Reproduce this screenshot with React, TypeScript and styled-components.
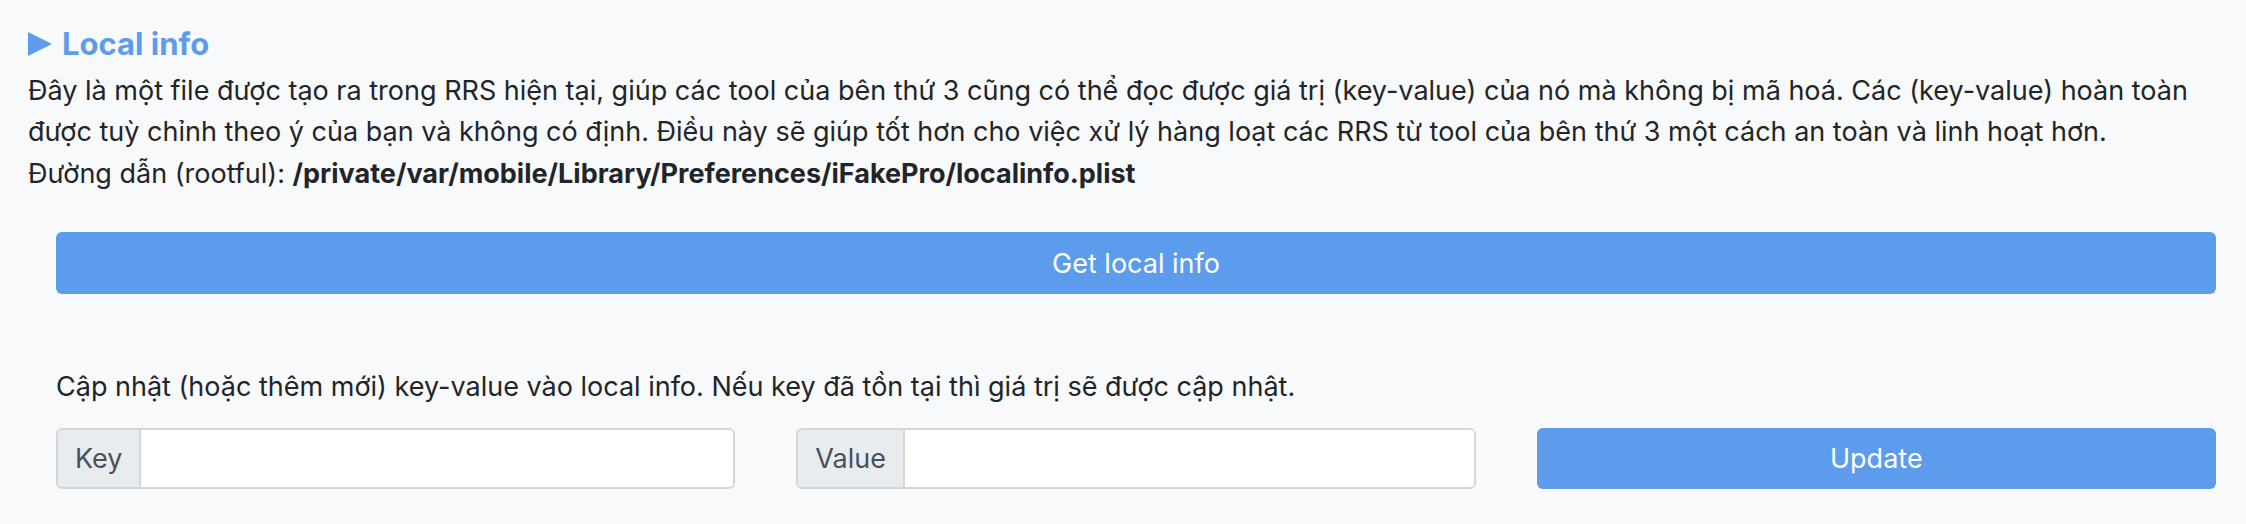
import React, { useState } from 'react'
import styled, { createGlobalStyle } from 'styled-components'

const GlobalStyle = createGlobalStyle`
  html, body {
    margin: 0;
    padding: 0;
    background: #f8f9fa;
  }
  body {
    font-family: Inter, "Noto Sans", "Liberation Sans", sans-serif;
    color: #212529;
  }
`

const Page = styled.div`
  padding: 25px 20px 30px 28px;
  background: #f8f9fa;
`

const Title = styled.h5`
  display: flex;
  align-items: center;
  gap: 10px;
  margin: 0 0 7.5px 0;
  font-size: 31px;
  line-height: 1.2;
  font-weight: 700;
  color: #5d9cec;
`

const Arrow = styled.span`
  display: inline-block;
  width: 0;
  height: 0;
  border-top: 12.5px solid transparent;
  border-bottom: 12.5px solid transparent;
  border-left: 24px solid #5d9cec;
`

const Text = styled.div`
  font-size: 27px;
  line-height: 41.5px;
  color: #212529;
`

const Path = styled.b`
  font-weight: 700;
`

const Section = styled.div<{ $top: number }>`
  margin: ${p => p.$top}px 10px 0 28px;
`

const Button = styled.button<{ $full?: boolean }>`
  display: block;
  width: 100%;
  height: ${p => (p.$full ? 62 : 61)}px;
  border: 0;
  border-radius: 6px;
  background: #5d9cec;
  color: #ffffff;
  font-family: inherit;
  font-size: 27px;
  cursor: pointer;
`

const Row = styled.div`
  display: grid;
  grid-template-columns: repeat(3, 1fr);
  gap: 61px;
  margin-top: 20px;
`

const InputGroup = styled.div`
  display: flex;
  height: 61px;
  border: 2px solid #d3d7dc;
  border-radius: 6px;
  overflow: hidden;
  background: #ffffff;
  box-sizing: border-box;
`

const Addon = styled.span`
  display: flex;
  align-items: center;
  padding: 0 17px;
  background: #e9ecef;
  border-right: 2px solid #d3d7dc;
  color: #495057;
  font-size: 27px;
`

const Field = styled.input`
  flex: 1;
  min-width: 0;
  border: 0;
  outline: 0;
  padding: 0 16px;
  font-family: inherit;
  font-size: 27px;
  color: #495057;
  background: #ffffff;
`

export default function App() {
  const [key, setKey] = useState('')
  const [value, setValue] = useState('')

  return (
    <>
      <GlobalStyle />
      <Page>
        <Title>
          <Arrow />
          Local info
        </Title>
        <Text>
          Đây là một file được tạo ra trong RRS hiện tại, giúp các tool của bên thứ 3 cũng có thể đọc được giá trị (key-value) của nó mà không bị mã hoá. Các (key-value) hoàn toàn được tuỳ chỉnh theo ý của bạn và không có định. Điều này sẽ giúp tốt hơn cho việc xử lý hàng loạt các RRS từ tool của bên thứ 3 một cách an toàn và linh hoạt hơn.
        </Text>
        <Text>
          Đường dẫn (rootful): <Path>/private/var/mobile/Library/Preferences/iFakePro/localinfo.plist</Path>
        </Text>
        <Section $top={38}>
          <Button $full>Get local info</Button>
        </Section>
        <Section $top={72}>
          <Text>Cập nhật (hoặc thêm mới) key-value vào local info. Nếu key đã tồn tại thì giá trị sẽ được cập nhật.</Text>
          <Row>
            <InputGroup>
              <Addon>Key</Addon>
              <Field value={key} onChange={e => setKey(e.target.value)} />
            </InputGroup>
            <InputGroup>
              <Addon>Value</Addon>
              <Field value={value} onChange={e => setValue(e.target.value)} />
            </InputGroup>
            <Button>Update</Button>
          </Row>
        </Section>
      </Page>
    </>
  )
}
